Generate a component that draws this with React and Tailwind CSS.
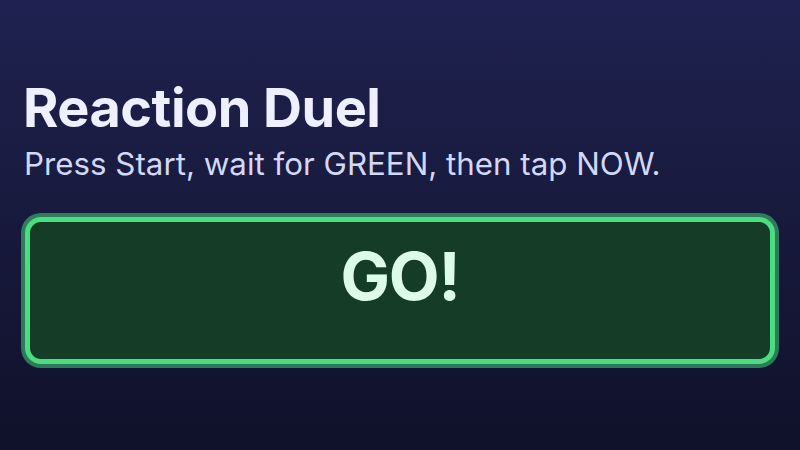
import React from "react";

export default function App() {
  return (
    <div
      className="w-[800px] h-[450px] bg-gradient-to-b from-[#1f2250] to-[#10112a] px-[25px] pt-[81px] text-white"
      style={{ fontFamily: "Inter, 'Noto Sans', sans-serif" }}
    >
      <h1 className="text-[54px] leading-[54px] font-bold text-[#eef0ff] tracking-[-0.5px] -ml-[2px]">
        Reaction Duel
      </h1>
      <p className="text-[31.3px] leading-[38px] text-[#d2d8f6] mt-[10px] -ml-[1px]">
        Press Start, wait for GREEN, then tap NOW.
      </p>
      <button className="mt-[34px] w-full h-[147px] rounded-[16px] border-[5px] border-[#4ade80] bg-[#143c26] shadow-[0_0_0_4px_rgba(74,222,128,0.5)] flex items-center justify-center pb-[30px]">
        <span className="text-[66px] font-bold text-[#dcfce7] leading-none tracking-[-1.3px]">GO!</span>
      </button>
    </div>
  );
}
